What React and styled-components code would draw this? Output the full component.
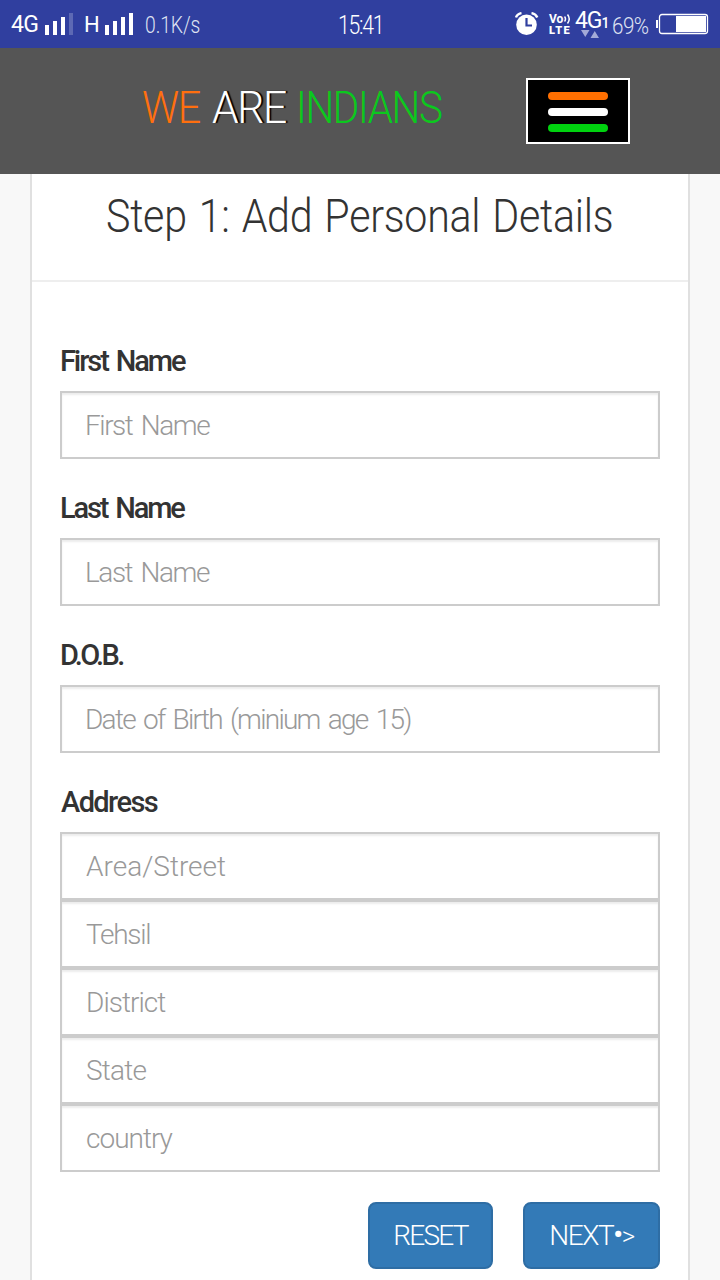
import React from "react";
import styled, { createGlobalStyle } from "styled-components";

const GlobalStyle = createGlobalStyle`
  * { box-sizing: border-box; }
  html, body { margin: 0; padding: 0; }
  body {
    width: 720px;
    height: 1280px;
    overflow: hidden;
    background: #f8f8f8;
    color: #333;
    font-family: Roboto, "Liberation Sans", sans-serif;
    font-weight: 300;
  }
`;

const Screen = styled.div`
  width: 720px;
  height: 1280px;
  overflow: hidden;
  display: flex;
  flex-direction: column;
`;

const StatusBar = styled.header`
  height: 48px;
  flex: none;
  background: #303f9f;
  color: #fff;
  display: grid;
  grid-template-columns: 338px 46px 1fr;
  align-items: center;
`;

const StatusGroup = styled.div`
  display: flex;
  align-items: center;
  height: 48px;
  padding-left: ${(p) => p.$start || 0}px;
`;

const StatusText = styled.span`
  display: block;
  width: ${(p) => p.$width}px;
  flex: none;
  white-space: nowrap;
  font-size: ${(p) => p.$size || 24}px;
  font-weight: ${(p) => p.$weight || 300};
  letter-spacing: ${(p) => p.$track || 0}px;
  line-height: 28px;
  padding-top: ${(p) => p.$drop || 0}px;
  color: ${(p) => p.$color || "#fff"};
  transform: scaleX(${(p) => p.$squeeze || 1});
  transform-origin: left;
`;

const Signal = styled.div`
  display: flex;
  align-items: flex-end;
  gap: 4px;
  height: 22px;
  margin-right: ${(p) => p.$after}px;
`;

const SignalBar = styled.i`
  width: 4px;
  height: ${(p) => p.$height}px;
  background: #fff;
  opacity: ${(p) => (p.$faint ? 0.22 : 1)};
`;

const StatusIcon = styled.svg`
  display: block;
  flex: none;
  margin-right: ${(p) => p.$after || 0}px;
`;

const Volte = styled.div`
  width: 26px;
  flex: none;
  display: flex;
  flex-direction: column;
  font-weight: 700;
  line-height: 11px;
`;

const VolteTop = styled.span`
  display: flex;
  align-items: center;
  gap: 1px;
  font-size: 12px;
  line-height: 12px;
`;

const VolteBottom = styled.span`
  font-size: 11px;
  font-weight: 900;
  letter-spacing: 1.3px;
`;

const Network = styled.div`
  width: 37px;
  height: 48px;
  flex: none;
  padding-top: 10px;
  display: flex;
  flex-direction: column;
`;

const NetworkName = styled.div`
  display: flex;
  align-items: baseline;
  height: 20px;
  font-size: 23px;
  font-weight: 400;
  line-height: 22px;
  letter-spacing: -1.1px;
`;

const NetworkIndex = styled.span`
  font-size: 14px;
  font-weight: 500;
  line-height: 17px;
`;

const Arrows = styled.svg`
  display: block;
  flex: none;
  margin: 0 0 0 6px;
`;

const NavBar = styled.nav`
  height: 126px;
  flex: none;
  background: #555;
  display: flex;
  justify-content: space-between;
  align-items: flex-start;
  padding: 30px 90px 0 142px;
`;

const Brand = styled.div`
  display: flex;
  font-size: 44px;
  line-height: 60px;
  white-space: nowrap;
`;

const BrandWord = styled.span`
  width: ${(p) => p.$width}px;
  color: ${(p) => p.$color};
  letter-spacing: -1.5px;
  text-shadow: ${(p) => (p.$shadow ? "2px 0 1px #000" : "none")};
  transform: scaleX(${(p) => p.$squeeze});
  transform-origin: left;
`;

const MenuButton = styled.button`
  width: 104px;
  height: 66px;
  padding: 2px 0 0;
  border: 2px solid #fff;
  background: #000;
  display: flex;
  flex-direction: column;
  align-items: center;
  justify-content: center;
  gap: 8px;
`;

const MenuLine = styled.span`
  width: 60px;
  height: 8px;
  border-radius: 4px;
  background: ${(p) => p.$color};
`;

const Card = styled.main`
  width: 660px;
  flex: 1;
  margin: 0 auto;
  background: #fff;
  border: solid #e0e0e0;
  border-width: 0 2px;
`;

const CardHeader = styled.div`
  height: 108px;
  padding: 14px 0 0 74px;
  border-bottom: 2px solid #eee;
`;

const CardTitle = styled.h1`
  margin: 0;
  font-size: 46px;
  font-weight: 300;
  line-height: 56px;
  letter-spacing: -0.3px;
  word-spacing: 2.5px;
  white-space: nowrap;
  transform: scaleX(0.895);
  transform-origin: left;
`;

const Form = styled.form`
  display: flex;
  flex-direction: column;
  gap: 30px;
  padding: 60px 28px 0;
`;

const Field = styled.div`
  display: flex;
  flex-direction: column;
`;

const Label = styled.label`
  font-size: 29px;
  font-weight: 500;
  line-height: 39px;
  margin-bottom: 10px;
  padding-left: ${(p) => p.$indent || 0}px;
  letter-spacing: ${(p) => p.$track}px;
  word-spacing: 3px;
`;

const Input = styled.input`
  width: 100%;
  height: 68px;
  padding: 0 ${(p) => p.$inset || 24}px;
  border: 2px solid #ccc;
  border-radius: 0;
  outline: none;
  background: #fff;
  box-shadow: inset 0 2px 2px rgba(0, 0, 0, 0.075);
  color: #555;
  font: 300 28px Roboto, "Liberation Sans", sans-serif;
  letter-spacing: ${(p) => p.$track || 0}px;
  word-spacing: 3px;
  &::placeholder { color: #999; opacity: 1; }
`;

const Actions = styled.div`
  display: flex;
  justify-content: flex-end;
  gap: 30px;
`;

const ActionButton = styled.button`
  width: ${(p) => p.$width}px;
  height: 67px;
  padding: 0;
  border: 2px solid #2e6da4;
  border-radius: 8px;
  background: #337ab7;
  color: #fff;
  display: flex;
  align-items: center;
  justify-content: center;
  font: 300 28px Roboto, "Liberation Sans", sans-serif;
  letter-spacing: ${(p) => p.$track}px;
`;

const Bullet = styled.span`
  font-weight: 500;
  margin-top: -3px;
`;

const Chevron = styled.span`
  font-size: 26px;
  margin-top: 1px;
`;

const fields = [
  { label: "First Name", labelTrack: -2.1, inset: 23, inputs: [["First Name", -1.45]] },
  { label: "Last Name", labelTrack: -2.15, inset: 23, inputs: [["Last Name", -1.45]] },
  { label: "D.O.B.", labelTrack: -2.6, inset: 23, inputs: [["Date of Birth (minium age 15)", -1.74]] },
  {
    label: "Address",
    labelTrack: -1.6,
    indent: 1,
    inset: 24,
    inputs: [["Area/Street", 0], ["Tehsil", -1.3], ["District", -0.95], ["State", -0.8], ["country", -1]],
  },
];

function SignalBars({ after, weak }) {
  return (
    <Signal $after={after}>
      <SignalBar $height={10} />
      <SignalBar $height={14} />
      <SignalBar $height={18} />
      <SignalBar $height={22} $faint={weak} />
    </Signal>
  );
}

export default function App() {
  return (
    <Screen>
      <GlobalStyle />
      <StatusBar>
        <StatusGroup $start={11}>
          <StatusText $width={34} $size={23} $weight={400} $track={-0.7} $drop={2}>4G</StatusText>
          <SignalBars after={11} weak />
          <StatusText $width={21} $size={22} $weight={400} $drop={1}>H</StatusText>
          <SignalBars after={12} />
          <StatusText $width={60} $size={23} $track={-0.1} $drop={3} $squeeze={0.84} $color="#dfe2f2">0.1K/s</StatusText>
        </StatusGroup>
        <StatusText $width={46} $size={25} $track={-1.5} $drop={3} $squeeze={0.85}>15:41</StatusText>
        <StatusGroup $start={131}>
          <StatusIcon $after={10} width="24" height="24" viewBox="0 0 24 24" fill="none">
            <circle cx="11.5" cy="12.8" r="10.3" fill="#fff" />
            <path d="M1 5.5Q2.2 1.8 6.5 1.1M16.5 1.1Q20.8 1.8 22.3 5.5" stroke="#fff" strokeWidth="2.4" />
            <path d="M11.5 6v7.5H17" stroke="#303f9f" strokeWidth="2.2" />
          </StatusIcon>
          <Volte>
            <VolteTop>
              Vo
              <svg width="7" height="10" viewBox="0 0 7 10" fill="none" stroke="#fff" strokeWidth="1.5">
                <path d="M0.5 2.5Q2.5 5 0.5 7.5M3.5 0.5Q7 5 3.5 9.5" />
              </svg>
            </VolteTop>
            <VolteBottom>LTE</VolteBottom>
          </Volte>
          <Network>
            <NetworkName>4G<NetworkIndex>1</NetworkIndex></NetworkName>
            <Arrows width="18" height="8" viewBox="0 0 18 8" fill="#a3aad7">
              <path d="M0 0h8.5L4.25 7zM9.5 8H18L13.75 1z" />
            </Arrows>
          </Network>
          <StatusText $width={44} $size={24} $drop={3} $track={-0.6} $squeeze={0.86} $color="#dfe2f2">69%</StatusText>
          <StatusIcon width="53" height="22" viewBox="0 0 53 22" fill="none">
            <path d="M1 7v8" stroke="#fff" strokeWidth="2" />
            <rect x="3.5" y="1.5" width="48" height="19" rx="2.5" stroke="#fff" strokeWidth="1.3" />
            <rect x="20" y="3" width="30" height="16" fill="#fff" />
          </StatusIcon>
        </StatusGroup>
      </StatusBar>
      <NavBar>
        <Brand>
          <BrandWord $width={70} $color="#ff6f0f" $squeeze={0.94}>WE</BrandWord>
          <BrandWord $width={84} $color="#fff" $squeeze={0.97} $shadow>ARE</BrandWord>
          <BrandWord $width={148} $color="#0bc91d" $squeeze={0.92}>INDIANS</BrandWord>
        </Brand>
        <MenuButton aria-label="Menu">
          <MenuLine $color="#ff6f00" />
          <MenuLine $color="#fff" />
          <MenuLine $color="#00d20f" />
        </MenuButton>
      </NavBar>
      <Card>
        <CardHeader>
          <CardTitle>Step 1: Add Personal Details</CardTitle>
        </CardHeader>
        <Form>
          {fields.map(({ label, labelTrack, indent, inset, inputs }) => (
            <Field key={label}>
              <Label $track={labelTrack} $indent={indent}>{label}</Label>
              {inputs.map(([placeholder, track]) => (
                <Input key={placeholder} placeholder={placeholder} $track={track} $inset={inset} />
              ))}
            </Field>
          ))}
          <Actions>
            <ActionButton type="reset" $width={125} $track={-1.7}>RESET</ActionButton>
            <ActionButton type="button" $width={137} $track={-1.4}>
              NEXT<Bullet>•</Bullet><Chevron>&gt;</Chevron>
            </ActionButton>
          </Actions>
        </Form>
      </Card>
    </Screen>
  );
}
